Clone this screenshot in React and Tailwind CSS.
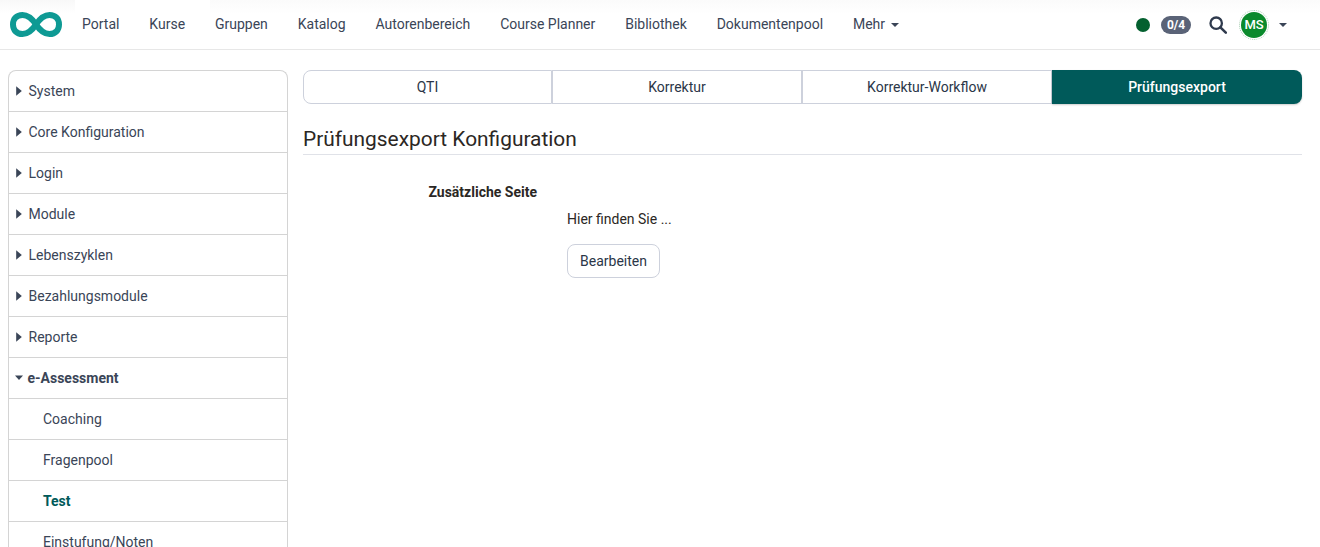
import React from 'react';

const navItems = ['Portal', 'Kurse', 'Gruppen', 'Katalog', 'Autorenbereich', 'Course Planner', 'Bibliothek', 'Dokumentenpool'];
const topRows = ['System', 'Core Konfiguration', 'Login', 'Module', 'Lebenszyklen', 'Bezahlungsmodule', 'Reporte'];
const subRows = ['Coaching', 'Fragenpool', 'Test', 'Einstufung/Noten'];
const tabs = ['QTI', 'Korrektur', 'Korrektur-Workflow'];

function Caret({ open }) {
  return (
    <svg width="8" height="10" viewBox="0 0 8 10" className="mr-[4.5px] shrink-0 fill-[#3a4557]">
      {open ? <path d="M0 2.5 L8 2.5 L4 7 Z" /> : <path d="M0.2 0.2 L5.8 5 L0.2 9.8 Z" />}
    </svg>
  );
}

function Header() {
  return (
    <header className="relative flex h-[50px] items-center border-b border-[#e7e7e7] pl-[10px] pr-[33px] bg-white">
      <div className="pointer-events-none absolute left-0 top-0 h-[14px] w-[75px] bg-gradient-to-b from-[#f8f8f8] to-white" />
      <div className="pointer-events-none absolute right-0 top-0 h-[14px] w-[1110px] bg-gradient-to-b from-[#fbfbfb] to-white" />
      <svg width="52" height="25" viewBox="0 0 52 25" className="relative mr-[20px] shrink-0" fill="none">
        <path
          d="M26 12.5 C29 8 33 3 39.5 3 C45.5 3 49 7 49 12.5 C49 18 45.5 22 39.5 22 C33 22 29 17 26 12.5 C23 8 19 3 12.5 3 C6.5 3 3 7 3 12.5 C3 18 6.5 22 12.5 22 C19 22 23 17 26 12.5 Z"
          stroke="#0e9a94"
          strokeWidth="6"
        />
      </svg>
      <nav className="relative flex items-center gap-[29.9px] text-[14px] text-[#3a4557]">
        {navItems.map((item) => (
          <span key={item}>{item}</span>
        ))}
        <span className="flex items-center gap-[6px]">
          Mehr
          <span className="mt-[1px] h-0 w-0 border-x-[4px] border-t-[4px] border-x-transparent border-t-[#3a4557]" />
        </span>
      </nav>
      <div className="relative ml-auto flex items-center">
        <span className="h-[14px] w-[14px] rounded-full bg-[#04602f]" />
        <span className="ml-[11px] flex h-[18px] w-[30px] items-center justify-center rounded-[9px] bg-[#5a6377] text-[12px] font-bold text-white">
          0/4
        </span>
        <svg width="18" height="18" viewBox="0 0 18 18" fill="none" stroke="#2f3a4d" className="ml-[18px]">
          <circle cx="7.2" cy="7.2" r="5.7" strokeWidth="2.3" />
          <path d="M11.4 11.4 L16.8 16.6" strokeWidth="2.6" strokeLinecap="round" />
        </svg>
        <span className="ml-[12px] flex h-[30px] w-[30px] items-center justify-center rounded-full border border-dotted border-[#a9d0b4] bg-white">
          <span className="flex h-[26px] w-[26px] items-center justify-center rounded-full bg-[#0a8a2c] text-[13px] font-medium text-white">
            MS
          </span>
        </span>
        <span className="ml-[10px] h-0 w-0 border-x-[4px] border-t-[4px] border-x-transparent border-t-[#3a4557]" />
      </div>
    </header>
  );
}

function Sidebar() {
  return (
    <aside className="w-[280px] shrink-0 rounded-t-[8px] border border-b-0 border-[#d4d4d4] text-[14px] text-[#3a4557]">
      {topRows.map((row) => (
        <div key={row} className="flex h-[41px] items-center border-b border-[#d4d4d4] pl-[7px]">
          <Caret />
          {row}
        </div>
      ))}
      <div className="flex h-[41px] items-center border-b border-[#d4d4d4] pl-[6px] font-bold">
        <Caret open />
        e-Assessment
      </div>
      {subRows.map((row) => (
        <div
          key={row}
          className={`flex h-[41px] items-center border-b border-[#d4d4d4] pl-[34px] ${row === 'Test' ? 'font-bold text-[#005a5a]' : ''}`}
        >
          {row}
        </div>
      ))}
    </aside>
  );
}

function Content() {
  return (
    <main className="min-w-0 flex-1">
      <div className="flex h-[34px] text-[14px] text-[#2b3648]">
        {tabs.map((tab, i) => (
          <div
            key={tab}
            className={`flex items-center justify-center border border-[#cdd1dc] ${i === 0 ? 'w-[249px] rounded-l-[8px]' : 'w-[250px]'}`}
          >
            {tab}
          </div>
        ))}
        <div className="flex flex-1 items-center justify-center rounded-r-[8px] bg-[#005a5a] font-medium text-white shadow-[0_1px_2px_rgba(0,0,0,0.2)]">
          Prüfungsexport
        </div>
      </div>
      <h2 className="mt-[20px] border-b border-[#e0e2e8] text-[20.9px] leading-[30px] text-[#2b2724]">
        Prüfungsexport Konfiguration
      </h2>
      <div className="mt-[27px] flex text-[14px] text-[#2b2724]">
        <div className="w-[234px] text-right font-bold leading-[20px]">Zusätzliche Seite</div>
        <div className="ml-[30px] pt-[27px]">
          <p className="leading-[20px]">Hier finden Sie ...</p>
          <button className="mt-[15px] h-[34px] w-[93px] rounded-[8px] border border-[#cdd1dc] bg-white text-[#2b3648]">
            Bearbeiten
          </button>
        </div>
      </div>
    </main>
  );
}

export default function App() {
  return (
    <div className="h-[547px] overflow-hidden bg-white font-['Roboto',sans-serif]">
      <Header />
      <div className="flex gap-[15px] pl-[8px] pr-[18px] pt-[20px]">
        <Sidebar />
        <Content />
      </div>
    </div>
  );
}
